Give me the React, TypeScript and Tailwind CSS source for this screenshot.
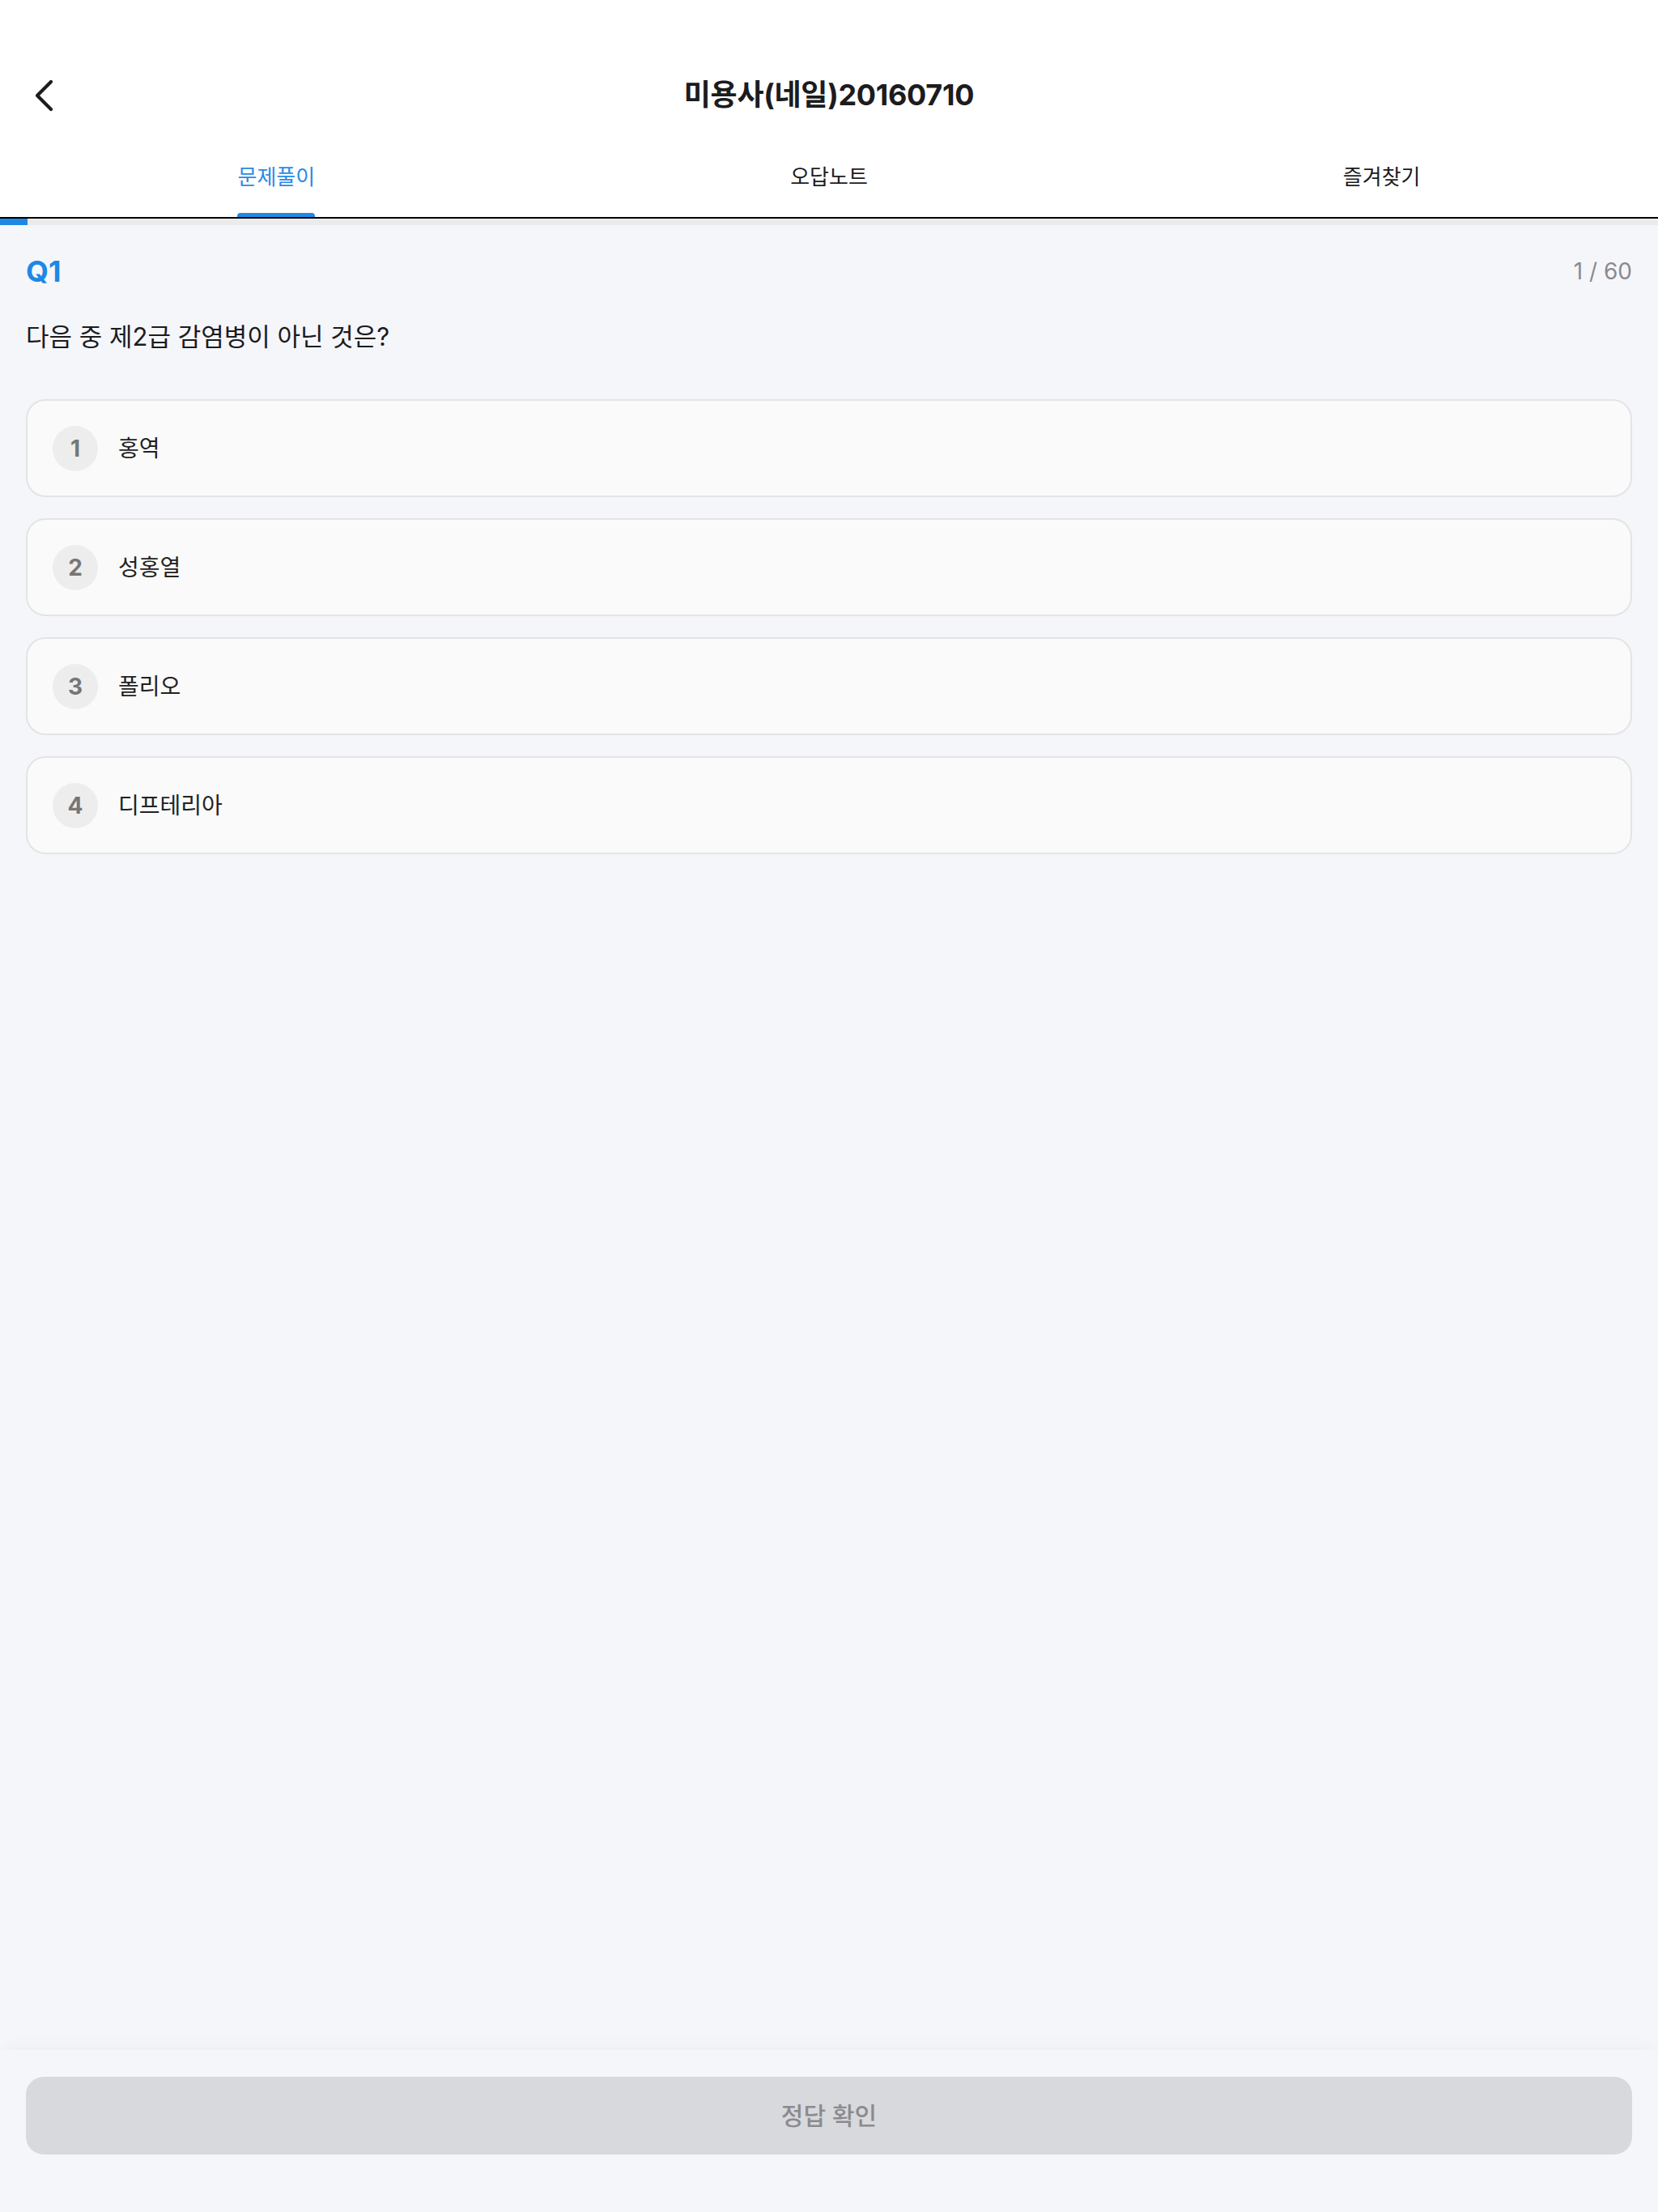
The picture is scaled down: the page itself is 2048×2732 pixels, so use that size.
import { useState } from "react";

const TABS = ["문제풀이", "오답노트", "즐겨찾기"];

const OPTIONS = ["홍역", "성홍열", "폴리오", "디프테리아"];

const TOTAL = 60;

function BackIcon() {
  return (
    <svg width="40" height="48" viewBox="0 0 40 48" fill="none">
      <path
        d="M33 8 L16 25 L33 42"
        stroke="#1c1c1e"
        strokeWidth="4.2"
        strokeLinecap="round"
        strokeLinejoin="round"
      />
    </svg>
  );
}

export default function App() {
  const [tab, setTab] = useState(0);
  const [current] = useState(1);
  const [picked, setPicked] = useState<number | null>(null);

  return (
    <div className="flex min-h-screen flex-col bg-[#f5f6fa] font-['Inter','Noto_Sans_CJK_KR',sans-serif] text-[#1c1c1e]">
      <header className="bg-white pt-[73px]">
        <div className="relative flex h-[88px] items-center justify-center">
          <button className="absolute left-[30px] top-[20px]">
            <BackIcon />
          </button>
          <h1 className="text-[36px] font-bold tracking-[-0.3px]">미용사(네일)20160710</h1>
        </div>

        <nav className="grid h-[109px] grid-cols-3 border-b-2 border-black">
          {TABS.map((t, i) => (
            <button
              key={t}
              onClick={() => setTab(i)}
              className="flex flex-col items-center"
            >
              <span
                className={
                  "flex flex-1 items-center pt-[12px] text-[26px] " +
                  (tab === i ? "text-[#2a8be6]" : "text-[#1c1c1e]")
                }
              >
                {t}
              </span>
              <span
                className={
                  "h-[5px] w-[96px] rounded-t-[4px] " +
                  (tab === i ? "bg-[#1e88e5]" : "bg-transparent")
                }
              />
            </button>
          ))}
        </nav>
      </header>

      {/* progress through the question set */}
      <div className="h-[8px] bg-[#ebebeb]">
        <div
          className="h-full bg-[#1e88e5]"
          style={{ width: `${(current / TOTAL) * 100}%` }}
        />
      </div>

      <main className="flex-1 px-[32px] pt-[37px]">
        <div className="flex h-[40px] items-center justify-between">
          <span className="text-[36px] font-bold text-[#1e88e5]">Q{current}</span>
          <span className="text-[28px] text-[#8a8a8e]">
            {current} / {TOTAL}
          </span>
        </div>

        <p className="mt-[41px] text-[31px] leading-[40px]">다음 중 제2급 감염병이 아닌 것은?</p>

        <ul className="mt-[57px] flex flex-col gap-[26px]">
          {OPTIONS.map((o, i) => (
            <li key={o}>
              <button
                onClick={() => setPicked(i)}
                className={
                  "flex h-[121px] w-full items-center gap-[25px] rounded-[24px] border-2 bg-[#fafafa] px-[31px] text-left " +
                  (picked === i ? "border-[#1e88e5]" : "border-[#e4e4e6]")
                }
              >
                <span className="flex size-[56px] items-center justify-center rounded-full bg-[#ededed] text-[28px] font-bold text-[#767676]">
                  {i + 1}
                </span>
                <span className="text-[28px] text-[#222]">{o}</span>
              </button>
            </li>
          ))}
        </ul>
      </main>

      <footer className="bg-[#f5f6fa] px-[32px] pb-[71px] pt-[33px] shadow-[0_-10px_18px_-6px_rgba(0,0,0,0.035)]">
        <button
          disabled={picked === null}
          className="flex h-[96px] w-full items-center justify-center rounded-[22px] bg-[#d8d9dc] text-[30px] font-medium text-[#8b8b8f]"
        >
          정답 확인
        </button>
      </footer>
    </div>
  );
}
